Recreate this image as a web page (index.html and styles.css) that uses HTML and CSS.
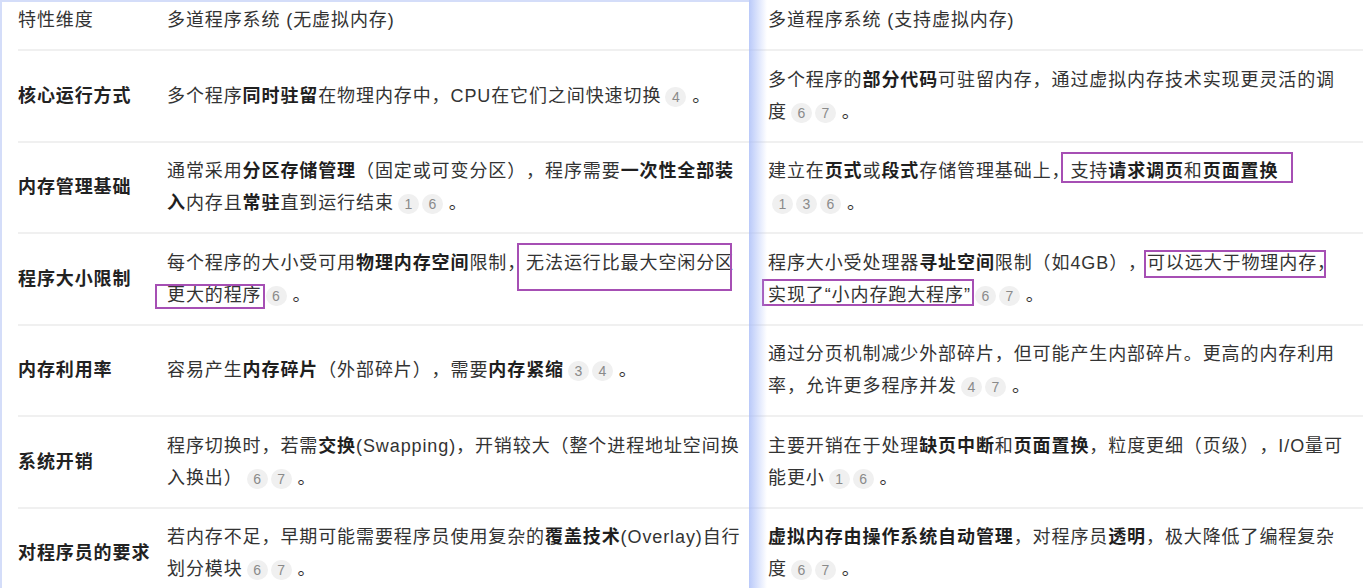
FILE: index.html
```html
<!DOCTYPE html>
<html lang="zh-CN">
<head>
<meta charset="UTF-8" />
<meta name="viewport" content="width=device-width, initial-scale=1.0" />
<title>多道程序系统对比</title>
<link rel="stylesheet" href="styles.css">
</head>
<body>

<div class="shot">

  <!-- 左侧：特性 + 无虚拟内存 -->
  <div class="pane pane-left">
    <div class="row head">
      <div class="c-key plain">特性维度</div>
      <div class="c-val">多道程序系统 (无虚拟内存)</div>
    </div>

    <div class="row">
      <div class="c-key">核心运行方式</div>
      <div class="c-val">多个程序<b>同时驻留</b>在物理内存中，CPU在它们之间快速切换<span class="cites"><span class="cite">4</span></span> 。</div>
    </div>

    <div class="row">
      <div class="c-key">内存管理基础</div>
      <div class="c-val">通常采用<b>分区存储管理</b>（固定或可变分区），程序需要<b>一次性全部装入</b>内存且<b>常驻</b>直到运行结束<span class="cites"><span class="cite">1</span><span class="cite">6</span></span> 。</div>
    </div>

    <div class="row">
      <div class="c-key">程序大小限制</div>
      <div class="c-val">每个程序的大小受可用<b>物理内存空间</b>限制，无法运行比最大空闲分区更大的程序<span class="cites"><span class="cite">6</span></span> 。</div>
      <span class="note note-a"></span>
      <span class="note note-b"></span>
    </div>

    <div class="row">
      <div class="c-key">内存利用率</div>
      <div class="c-val">容易产生<b>内存碎片</b>（外部碎片），需要<b>内存紧缩</b><span class="cites"><span class="cite">3</span><span class="cite">4</span></span> 。</div>
    </div>

    <div class="row">
      <div class="c-key">系统开销</div>
      <div class="c-val">程序切换时，若需<b>交换</b>(Swapping)，开销较大（整个进程地址空间换入换出）<span class="cites"><span class="cite">6</span><span class="cite">7</span></span> 。</div>
    </div>

    <div class="row">
      <div class="c-key">对程序员的要求</div>
      <div class="c-val">若内存不足，早期可能需要程序员使用复杂的<b>覆盖技术</b>(Overlay)自行划分模块<span class="cites"><span class="cite">6</span><span class="cite">7</span></span> 。</div>
    </div>
  </div>

  <!-- 右侧：支持虚拟内存 -->
  <div class="pane pane-right">
    <div class="row head">
      <div class="c-val">多道程序系统 (支持虚拟内存)</div>
    </div>

    <div class="row">
      <div class="c-val">多个程序的<b>部分代码</b>可驻留内存，通过虚拟内存技术实现更灵活的调度<span class="cites"><span class="cite">6</span><span class="cite">7</span></span> 。</div>
    </div>

    <div class="row">
      <div class="c-val">建立在<b>页式</b>或<b>段式</b>存储管理基础上，支持<b>请求调页</b>和<b>页面置换</b><span class="cites"><span class="cite">1</span><span class="cite">3</span><span class="cite">6</span></span> 。</div>
      <span class="note note-c"></span>
    </div>

    <div class="row">
      <div class="c-val">程序大小受处理器<b>寻址空间</b>限制（如4GB），可以远大于物理内存，实现了“小内存跑大程序”<span class="cites"><span class="cite">6</span><span class="cite">7</span></span> 。</div>
      <span class="note note-d"></span>
      <span class="note note-e"></span>
    </div>

    <div class="row">
      <div class="c-val">通过分页机制减少外部碎片，但可能产生内部碎片。更高的内存利用率，允许更多程序并发<span class="cites"><span class="cite">4</span><span class="cite">7</span></span> 。</div>
    </div>

    <div class="row">
      <div class="c-val">主要开销在于处理<b>缺页中断</b>和<b>页面置换</b>，粒度更细（页级），I/O量可能更小<span class="cites"><span class="cite">1</span><span class="cite">6</span></span> 。</div>
    </div>

    <div class="row">
      <div class="c-val"><b>虚拟内存由操作系统自动管理</b>，对程序员<b>透明</b>，极大降低了编程复杂度<span class="cites"><span class="cite">6</span><span class="cite">7</span></span> 。</div>
    </div>
  </div>

</div>

</body>
</html>
```

FILE: styles.css
```css
body {
  margin: 0;
  background: #fff;
  color: #333;
  font-family: "Liberation Sans", "Noto Sans CJK SC", sans-serif;
  font-size: 18px;
  letter-spacing: 0.9px;
  text-spacing-trim: space-all;
  overflow: hidden;
}

.shot {
  display: flex;
  height: 588px;
  overflow: hidden;
}

.pane {
  box-sizing: border-box;
}

.pane-left {
  flex: none;
  width: 749px;
  padding-left: 16px;
  border-left: 2px solid #d4ddf9;
  border-top: 2px solid #d4ddf9;
}

.pane-right {
  flex: 1;
  position: relative;
  padding-top: 2px;
}

/* 蓝色窗口阴影 */
.pane-right::before {
  content: "";
  position: absolute;
  left: 0;
  top: 0;
  bottom: 0;
  width: 18px;
  background: linear-gradient(to right, rgba(168, 188, 248, 0.8), rgba(255, 255, 255, 0));
  z-index: 2;
}

.row {
  position: relative;
  display: flex;
  align-items: center;
  height: 91.5px;
  box-sizing: border-box;
  border-bottom: 2px solid #f0f0f0;
}

.row.head {
  height: 49px;
  align-items: flex-start;
  padding-top: 2px;
}

.c-key {
  flex: none;
  width: 149px;
  line-height: 32px;
  font-weight: 700;
  color: #222;
}

.c-key.plain {
  font-weight: 400;
  color: #333;
}

.c-val {
  flex: 1;
  line-height: 32px;
  padding-right: 4px;
}

.pane-right .c-val {
  padding: 0 17px 0 19px;
}

b {
  font-weight: 700;
  color: #1f1f1f;
}

.cites {
  white-space: nowrap;
  margin-left: 4px;
}

.cite {
  display: inline-block;
  width: 21px;
  height: 20px;
  line-height: 20px;
  margin-right: 3px;
  border-radius: 10px;
  background: #f0f0f0;
  color: #8a8a8a;
  font-family: "Liberation Sans", sans-serif;
  font-size: 14px;
  letter-spacing: 0;
  text-align: center;
}

.cite:last-child {
  margin-right: 0;
}

/* 紫色标注框 */
.note {
  position: absolute;
  box-sizing: border-box;
  border: 2px solid #a64fb4;
}

.note-a { left: 499px; top: 9px;   width: 215px; height: 48px; }
.note-b { left: 137px; top: 50px;  width: 110px; height: 25px; }
.note-c { left: 312px; top: 9.5px; width: 232px; height: 31px; }
.note-d { left: 395px; top: 16px;  width: 182px; height: 28px; }
.note-e { left: 13px;  top: 45px;  width: 212px; height: 27px; }
```
